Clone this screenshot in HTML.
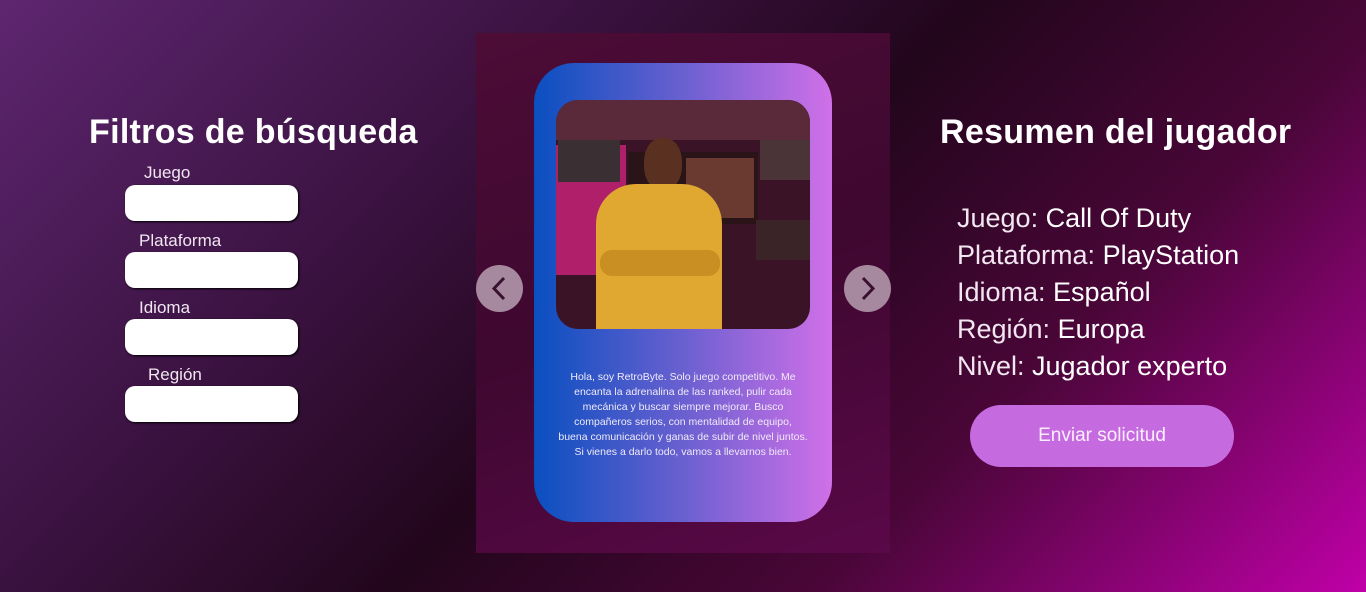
<!DOCTYPE html>
<html><head><meta charset="utf-8"><style>
*{margin:0;padding:0;box-sizing:border-box}
body{width:1366px;height:592px;overflow:hidden;position:relative;font-family:"Liberation Sans","DejaVu Sans",sans-serif;color:#fff;
background:linear-gradient(135deg,#5e2670 0%,#3a1240 30%,#22061c 50%,#4a0638 72%,#c000a8 100%)}
.abs{position:absolute}
h1{position:absolute;font-size:34px;font-weight:bold;white-space:nowrap;letter-spacing:0.3px}
.lbl{position:absolute;font-size:17px;color:#f0e6f0}
.inp{position:absolute;left:125px;width:173px;height:36px;background:#fff;border-radius:10px;box-shadow:1px 1px 2px #000}
.sum{position:absolute;left:957px;font-size:27px;color:#f2e6f0;white-space:nowrap}
.sum b{font-weight:normal;color:#fff}
.arrow{position:absolute;width:47px;height:47px;border-radius:50%;background:#a7899f;top:265px}
</style></head><body>
<h1 style="left:89px;top:113px">Filtros de búsqueda</h1>
<div class="lbl" style="left:144px;top:163px">Juego</div>
<div class="inp" style="top:185px"></div>
<div class="lbl" style="left:139px;top:231px">Plataforma</div>
<div class="inp" style="top:252px"></div>
<div class="lbl" style="left:139px;top:298px">Idioma</div>
<div class="inp" style="top:319px"></div>
<div class="lbl" style="left:148px;top:365px">Región</div>
<div class="inp" style="top:386px"></div>

<div class="abs" style="left:476px;top:33px;width:414px;height:520px;background:linear-gradient(160deg,#4c0c36,#3e0830 50%,#5a0848)"></div>
<div class="abs" style="left:534px;top:63px;width:298px;height:459px;border-radius:40px;background:linear-gradient(90deg,#0a4fc0,#6a60d0 50%,#d070e8)"></div>
<div class="abs" style="left:556px;top:100px;width:254px;height:229px;border-radius:22px;overflow:hidden;background:#3a1426">
 <div class="abs" style="left:0;top:0;width:254px;height:40px;background:#5a2a3a"></div>
 <div class="abs" style="left:0;top:45px;width:70px;height:130px;background:#b0206a"></div>
 <div class="abs" style="left:2px;top:40px;width:62px;height:42px;background:#3a3034"></div>
 <div class="abs" style="left:72px;top:52px;width:130px;height:72px;background:#2a1418"></div>
 <div class="abs" style="left:130px;top:58px;width:68px;height:60px;background:#6a3a30"></div>
 <div class="abs" style="left:204px;top:40px;width:50px;height:40px;background:#4a3438"></div>
 <div class="abs" style="left:200px;top:120px;width:54px;height:40px;background:#3a2428"></div>
 <div class="abs" style="left:88px;top:38px;width:38px;height:52px;border-radius:45%;background:#5a3020"></div>
 <div class="abs" style="left:40px;top:84px;width:126px;height:160px;border-radius:40px 40px 0 0;background:#e0a830"></div>
 <div class="abs" style="left:44px;top:150px;width:120px;height:26px;border-radius:12px;background:#c98f22"></div>
</div>
<div class="abs" style="left:534px;top:370px;width:298px;text-align:center;font-size:10.5px;line-height:15px;color:#f0eaf8;white-space:nowrap">Hola, soy RetroByte. Solo juego competitivo. Me<br>encanta la adrenalina de las ranked, pulir cada<br>mecánica y buscar siempre mejorar. Busco<br>compañeros serios, con mentalidad de equipo,<br>buena comunicación y ganas de subir de nivel juntos.<br>Si vienes a darlo todo, vamos a llevarnos bien.</div>
<div class="arrow" style="left:476px"><svg width="47" height="47"><path d="M28 13 L18 23.5 L28 34" fill="none" stroke="#3a1030" stroke-width="3"/></svg></div>
<div class="arrow" style="left:844px"><svg width="47" height="47"><path d="M19 13 L29 23.5 L19 34" fill="none" stroke="#3a1030" stroke-width="3"/></svg></div>

<h1 style="left:940px;top:113px">Resumen del jugador</h1>
<div class="sum" style="top:203px">Juego: <b>Call Of Duty</b></div>
<div class="sum" style="top:240px">Plataforma: <b>PlayStation</b></div>
<div class="sum" style="top:277px">Idioma: <b>Español</b></div>
<div class="sum" style="top:314px">Región: <b>Europa</b></div>
<div class="sum" style="top:351px">Nivel: <b>Jugador experto</b></div>
<div class="abs" style="left:970px;top:405px;width:264px;height:62px;border-radius:31px;background:#c66ae0;text-align:center;line-height:62px;font-size:19px;color:#fbeefe">Enviar solicitud</div>
</body></html>
